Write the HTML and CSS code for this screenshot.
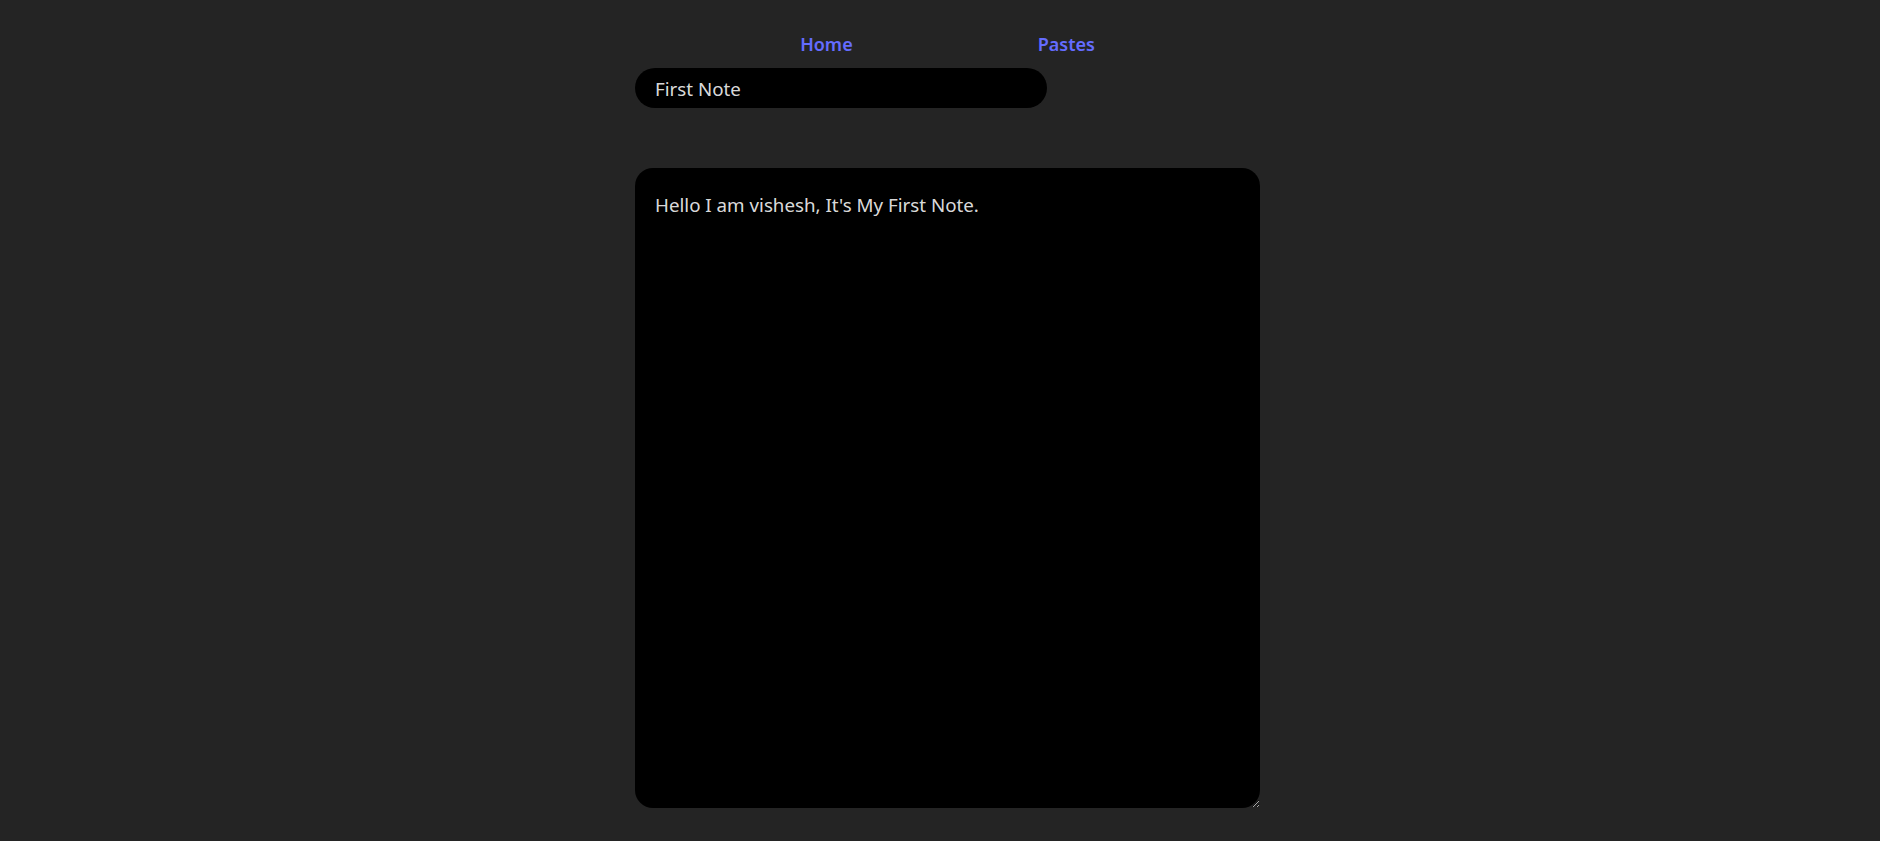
FILE: index.html
```html
<!DOCTYPE html>
<html lang="en">
<head>
<meta charset="utf-8">
<title>Paste App</title>
<link rel="stylesheet" href="styles.css">
</head>
<body>
<div class="page">
  <nav class="nav">
    <a class="nav-link" href="#">Home</a>
    <a class="nav-link" href="#">Pastes</a>
  </nav>
  <div class="title-row">
    <input class="title-input" type="text" value="First Note">
  </div>
  <div class="content-row">
    <textarea class="content-area">Hello I am vishesh, It's My First Note.</textarea>
  </div>
</div>
</body>
</html>
```
FILE: styles.css
```css
html, body {
  margin: 0;
  padding: 0;
  background: #242424;
  color: rgba(255, 255, 255, 0.87);
  font-family: "Noto Sans", "Open Sans", sans-serif;
  font-size: 18px;
  line-height: 1.5;
}

.page {
  box-sizing: border-box;
  width: 640px;
  margin: 0 auto;
  padding: 29px 0 0 15px;
}

.nav {
  display: flex;
  justify-content: center;
  gap: 185px;
  height: 30px;
  align-items: center;
}

.nav-link {
  color: #646cff;
  text-decoration: none;
  font-weight: 600;
  font-size: 18px;
}

.title-row {
  margin-top: 9px;
}

.title-input {
  box-sizing: border-box;
  width: 412px;
  height: 40px;
  border: none;
  outline: none;
  border-radius: 20px;
  background: #000;
  color: rgba(255, 255, 255, 0.87);
  font-family: inherit;
  font-size: 18.75px;
  padding: 0 20px;
}

.content-row {
  margin-top: 60px;
}

.content-area {
  display: block;
  box-sizing: border-box;
  width: 625px;
  height: 640px;
  border: none;
  outline: none;
  border-radius: 18px;
  background: #000;
  color: rgba(255, 255, 255, 0.87);
  font-family: inherit;
  font-size: 18.75px;
  line-height: 1.5;
  padding: 23px 20px 20px 20px;
}
```
